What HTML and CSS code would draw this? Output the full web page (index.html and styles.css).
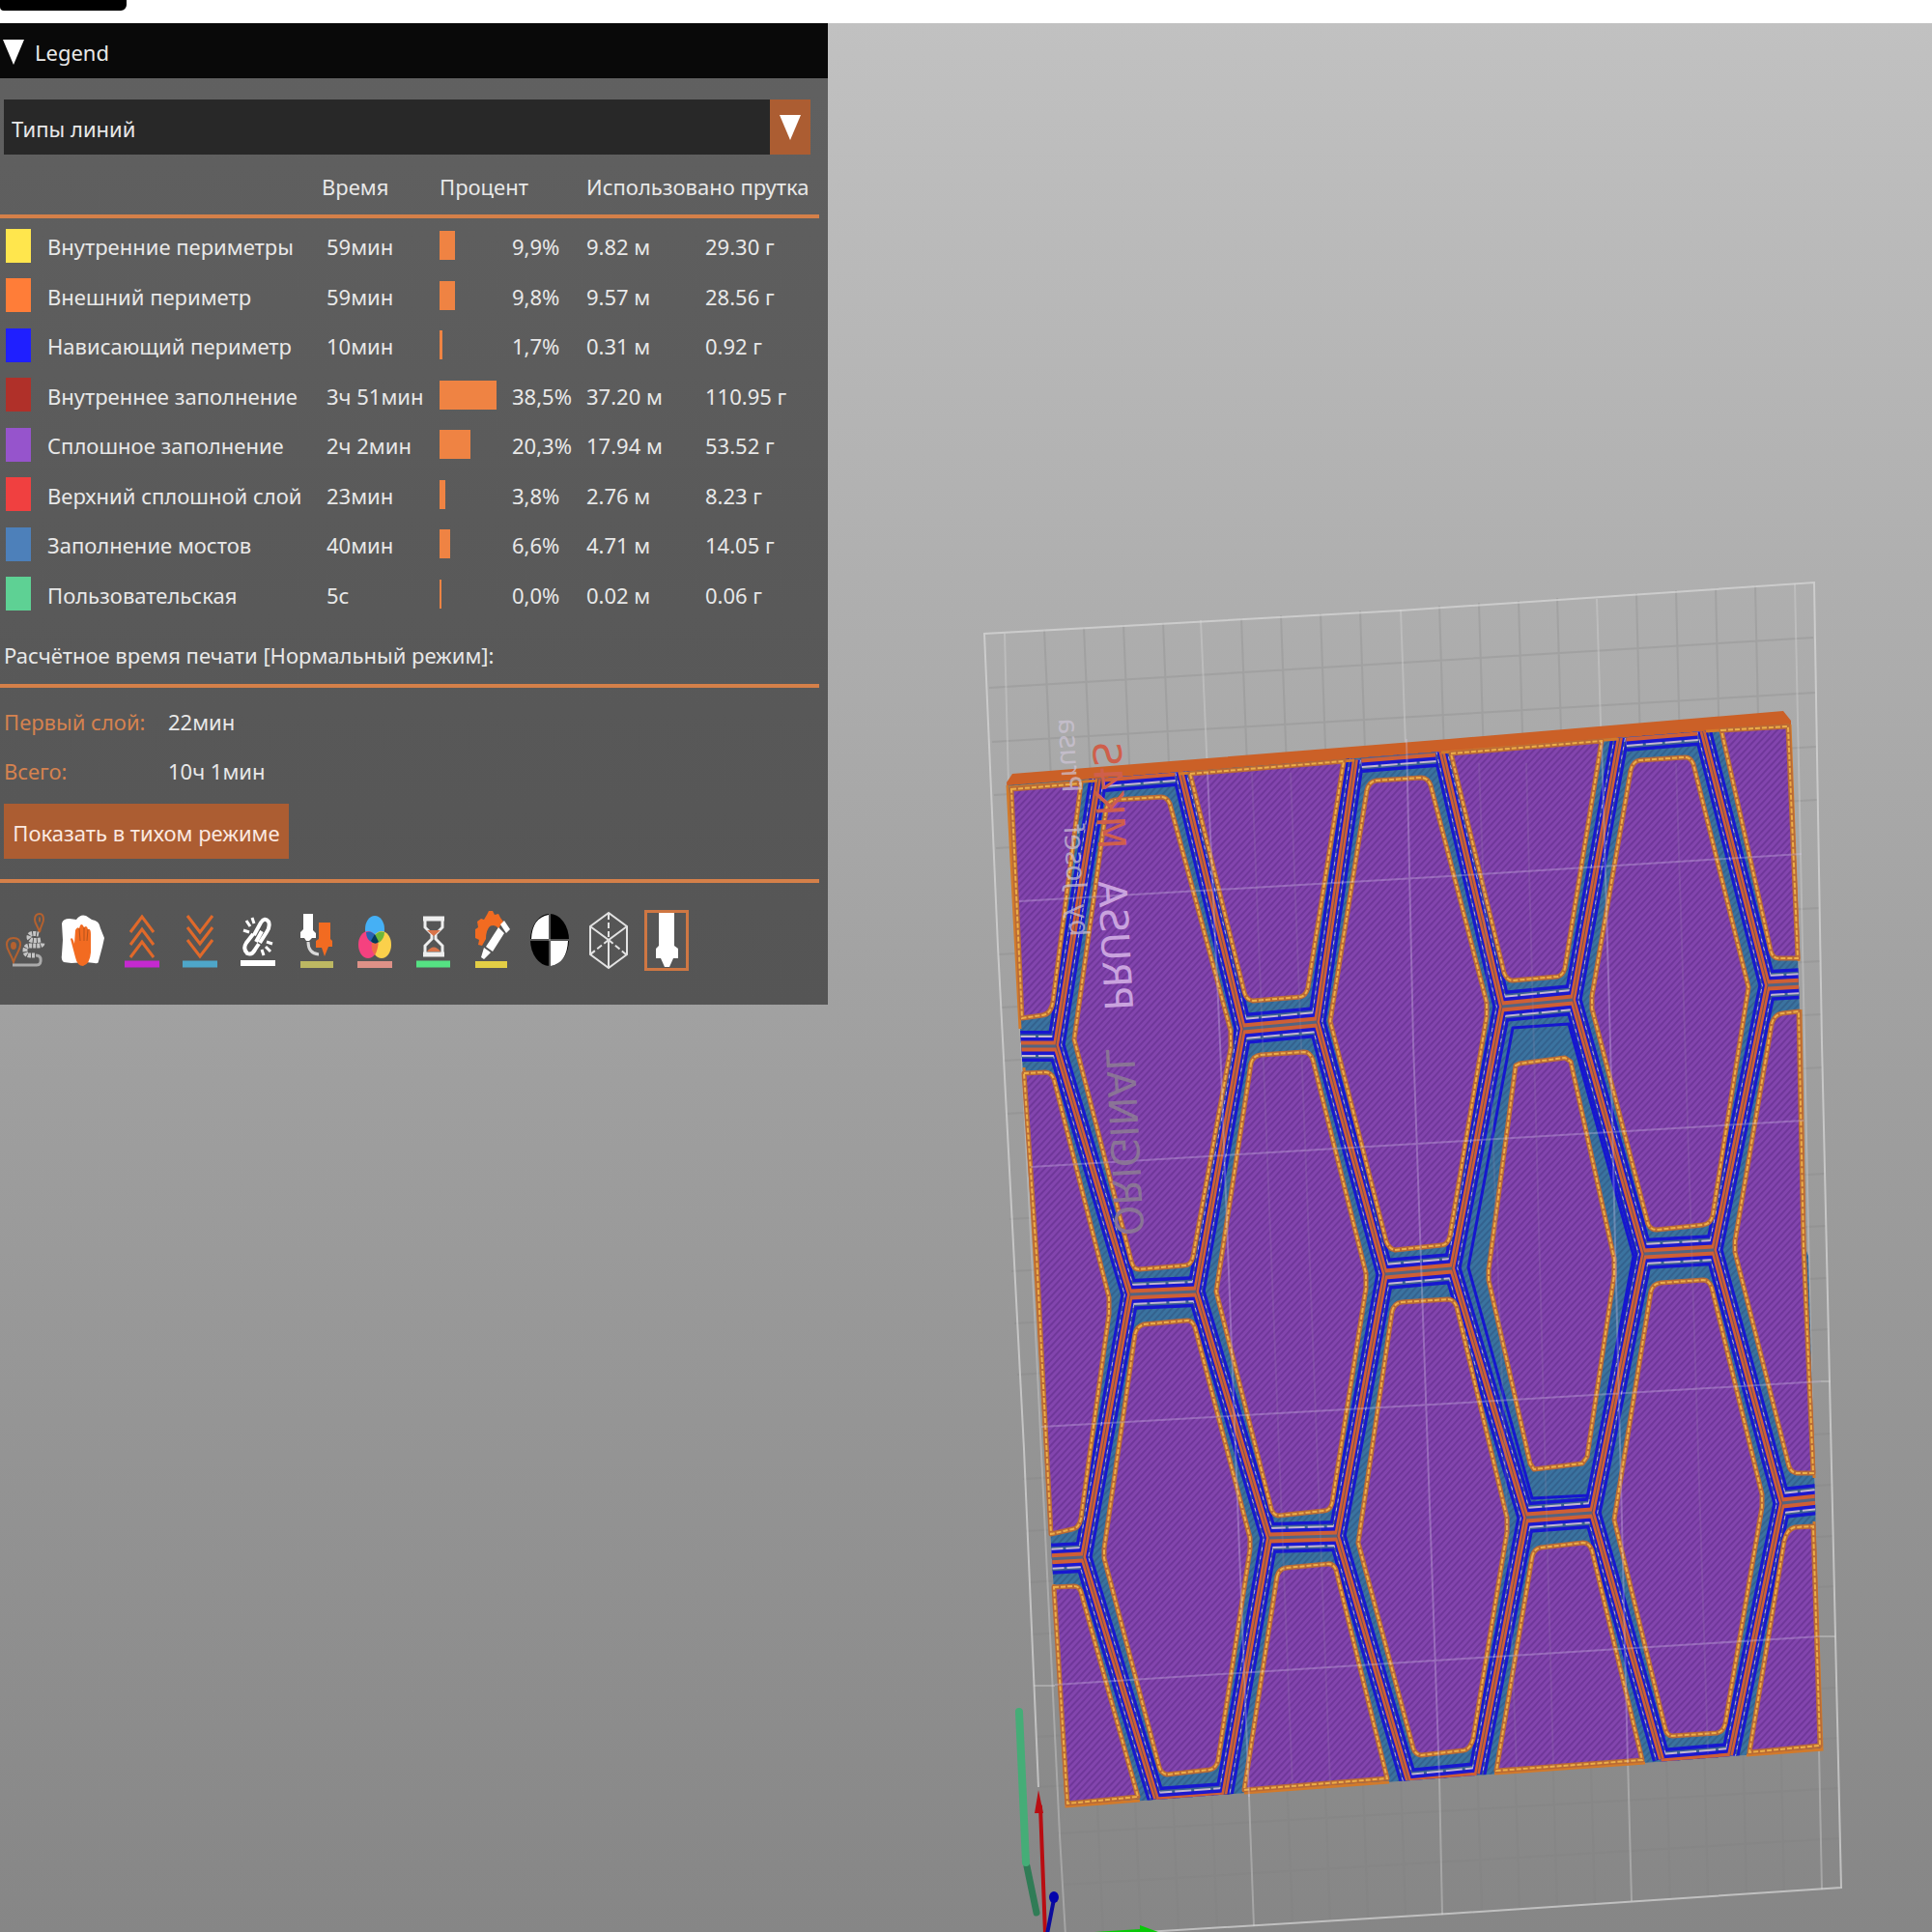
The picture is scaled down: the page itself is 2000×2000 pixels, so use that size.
FILE: index.html
```html
<!DOCTYPE html>
<html lang="ru">
<head>
<meta charset="utf-8">
<title>Legend</title>
<meta name="viewport" content="width=device-width, initial-scale=1">
<link rel="stylesheet" href="styles.css">
</head>
<body>
<header class="topbar"><div class="topbar-tab"></div></header>
<main class="viewport">
<svg class="scene" viewBox="0 24 2000 1976" preserveAspectRatio="xMinYMin meet" aria-hidden="true">
  <defs>
    <pattern id="solid" width="5" height="5" patternUnits="userSpaceOnUse" patternTransform="rotate(-47)">
      <rect width="5" height="5" fill="#8345ae"/><rect width="5" height="2" fill="#6f3799"/>
    </pattern>
    <pattern id="bridge" width="5" height="5" patternUnits="userSpaceOnUse" patternTransform="rotate(-47)">
      <rect width="5" height="5" fill="#3b73a0"/><rect width="5" height="2" fill="#33628e"/>
    </pattern>
    <path id="outline" d="M1043 813L1853 750L1864 1080L1868 1290L1872 1300L1886 1811L1500 1840L1104 1870L1087 1580L1070 1280L1056 1065Z"/>
    <clipPath id="part"><use href="#outline"/></clipPath>
    <path id="slants" d="M1137 806L1093 1082L1170 1340L1121 1612L1197 1862M1222 798L1287 1065L1238 1337L1314 1592L1267 1859M1403 786L1363 1058L1434 1319L1384 1590L1458 1843M1492 776L1555 1042L1503 1313L1580 1571L1529 1836M1677 763L1628 1035L1702 1298L1648 1566L1720 1821M1762 755L1830 1020L1774 1294L1845 1556L1791 1817"/>
    <path id="flats" d="M1055 1083H1093M1287 1065L1363 1058M1555 1042L1628 1035M1830 1020L1866 1018M1170 1340L1238 1337M1434 1319L1503 1313M1702 1298L1774 1294M1084 1614L1121 1612M1314 1592L1384 1590M1580 1571L1648 1566M1845 1556L1882 1552M1143 804L1216 798M1409 784L1486 778M1683 762L1757 756M1197 1866L1267 1861M1458 1847L1529 1840M1720 1826L1791 1820"/>
    <path id="cells" d="M1047 817L1119 811L1090 1037Q1088 1050 1079 1051L1058 1054Z
      M1060 1111L1082 1110Q1088 1110 1091 1117L1148 1343V1360L1119 1572Q1117 1582 1110 1583L1088 1588L1073 1300Z
      M1091 1643L1112 1642Q1117 1642 1119 1648L1178 1860L1105 1867Z
      M1145 838Q1147 829 1154 828L1202 825Q1208 825 1211 832L1274 1067V1085L1235 1301Q1233 1310 1226 1310L1179 1314Q1173 1314 1171 1305L1112 1076Z
      M1175 1381Q1177 1373 1184 1371L1228 1367Q1234 1366 1237 1374L1294 1592V1604L1261 1822Q1259 1831 1252 1832L1208 1837Q1202 1836 1200 1829L1143 1613V1603Z
      M1232 801L1391 788L1354 1022Q1352 1031 1346 1032L1297 1036Q1290 1035 1288 1027Z
      M1295 1101Q1297 1093 1305 1092L1350 1089Q1356 1089 1359 1097L1414 1318V1334L1379 1556Q1377 1564 1370 1564L1323 1569Q1318 1568 1316 1562L1259 1337Z
      M1322 1632Q1324 1624 1331 1623L1374 1619Q1380 1618 1383 1625L1436 1841L1288 1853Z
      M1415 818Q1417 809 1425 808L1471 805Q1478 805 1481 813L1539 1038V1052L1501 1279Q1499 1289 1492 1289L1444 1294Q1438 1293 1435 1285L1377 1057Z
      M1441 1358Q1443 1349 1451 1348L1499 1345Q1505 1345 1508 1353L1560 1571V1586L1525 1800Q1522 1811 1515 1812L1471 1817Q1465 1816 1463 1810L1406 1597Z
      M1502 780L1658 767L1620 1002Q1618 1010 1612 1011L1566 1015Q1560 1015 1557 1007Z
      M1569 1103L1573 1101L1620 1095L1626 1099L1671 1303V1320L1643 1508L1638 1515L1588 1521L1584 1515L1541 1325V1315Z
      M1586 1612Q1588 1603 1595 1602L1639 1597Q1645 1597 1648 1605L1700 1822L1549 1833Z
      M1688 798Q1690 788 1698 787L1743 784Q1750 783 1753 791L1810 1022L1773 1258Q1771 1267 1763 1268L1715 1273Q1709 1273 1706 1267L1648 1044V1031Z
      M1709 1337Q1711 1329 1719 1328L1763 1325Q1769 1325 1772 1333L1824 1547V1560L1786 1784Q1784 1793 1777 1794L1731 1797Q1726 1797 1724 1790L1671 1573Z
      M1782 756L1851 752L1861 992H1841Q1835 992 1833 984Z
      M1834 1060Q1837 1050 1845 1049L1862 1047L1867 1290L1877 1525H1860Q1854 1524 1852 1518L1796 1296V1285Z
      M1847 1595Q1850 1583 1858 1581L1877 1580L1884 1807L1811 1814Z"/>
  </defs>

  <!-- print bed: fine grid -->
  <path class="grid-fine" d="M1081 652L1142 2002M1122 650L1181 1999M1163 647L1220 1997M1204 645L1260 1994M1285 640L1338 1989M1326 637L1377 1987M1367 635L1416 1985M1408 632L1455 1982M1490 627L1534 1977M1531 624L1573 1975M1572 622L1612 1973M1612 619L1651 1970M1694 614L1729 1966M1735 611L1768 1963M1776 609L1808 1960M1817 606L1847 1958
    M1024 712L1877 660M1027 768L1879 717M1029 823L1880 773M1031 878L1881 828M1034 988L1883 940M1037 1043L1884 995M1039 1098L1885 1050M1041 1153L1886 1105M1045 1262L1889 1215M1047 1316L1890 1269M1050 1370L1891 1323M1053 1423L1893 1376M1059 1531L1895 1484M1062 1585L1897 1537M1065 1638L1898 1590M1068 1692L1899 1642M1072 1798L1902 1747M1075 1850L1903 1799M1095 1898L1904 1851M1100 1951L1905 1903"/>
  <path class="grid-edge" d="M1243 642L1250 800L1293 1860L1298 1994M1450 631L1456 800L1490 1840L1493 1982M1653 620L1658 780L1685 1820L1689 1968M1858 604L1864 884L1886 1956M1040 656L1044 812L1058 1100L1073 1400L1097 1900L1103 2004"/>
  <path class="grid-rim" d="M1103 2005L1500 1981L1906 1954L1900 1694L1886 1080L1878 603L1450 632L1019 656L1033 980L1060 1500L1075 1850"/>
  <path class="grid-edge" d="M1070 1745H1092M1884 1694H1900M1885 1430H1895"/>

  <!-- sliced part -->
  <path d="M1042 810L1048 801L1500 765L1846 736L1854 746V760L1043 822Z" fill="#cb6027"/>
  <use href="#outline" fill="url(#bridge)"/>
  <g clip-path="url(#part)" fill="none" stroke-linejoin="round">
    <path d="M1566 1064L1624 1060L1691 1300L1645 1548L1586 1551L1520 1312Z" stroke="#1616cf" stroke-width="3"/>
    <use href="#flats" stroke="#1717d0" stroke-width="32"/>
    <use href="#slants" stroke="#1717d0" stroke-width="19"/>
    <use href="#flats" stroke="#3d6390" stroke-width="25"/>
    <use href="#slants" stroke="#3f568f" stroke-width="13"/>
    <use href="#flats" stroke="#c3b8d0" stroke-width="22" stroke-dasharray="17 3"/>
    <use href="#slants" stroke="#b9afd8" stroke-width="12" stroke-dasharray="4 5"/>
    <use href="#flats" stroke="#1c18cf" stroke-width="18"/>
    <use href="#slants" stroke="#1c18cf" stroke-width="10"/>
    <use href="#flats" stroke="#cf5f35" stroke-width="11"/>
    <use href="#slants" stroke="#cf5f35" stroke-width="6"/>
    <use href="#flats" stroke="#536482" stroke-width="3"/>
    <use href="#slants" stroke="#6a5262" stroke-width="1"/>
  </g>
  <path d="M1045 815L1136 808M1220 801L1402 787M1492 779L1675 765M1766 757L1852 751M1043 813L1056 1065M1060 1105L1087 1580M1091 1640L1104 1870L1180 1864M1288 1856L1438 1845M1547 1836L1703 1825M1808 1817L1886 1811L1878 1575M1853 750L1862 995M1864 1045L1868 1290L1878 1530" fill="none" stroke="#d27a2b" stroke-width="3"/>
  <use href="#cells" fill="url(#solid)" stroke="#b96a35" stroke-width="5" stroke-linejoin="round"/>
  <use href="#cells" fill="none" stroke="#ecae48" stroke-width="2" stroke-dasharray="5 2"/>

  <!-- bed lines seen through the part -->
  <path class="grid-over" d="M1055 933L1500 907L1865 884M1067 1208L1500 1182L1867 1160M1078 1477L1500 1453L1885 1430M1092 1744L1500 1718L1884 1694M1250 800L1263 1080L1282 1580L1293 1860M1456 765L1463 1080L1480 1560L1490 1840M1658 768L1667 1080L1685 1825"/>
  <path class="grid-hint" d="M1296 800L1338 1850M1336 800L1377 1848M1531 790L1570 1830M1580 790L1608 1828M1735 790L1768 1815"/>

  <g class="bed-title">
    <text transform="translate(1155 1280) rotate(-93) scale(1 -1)" fill="#8a7496">ORIGINAL</text>
    <text transform="translate(1144 1047) rotate(-93) scale(1 -1)" fill="#c9a3de">PRUSA</text>
    <text transform="translate(1137 880) rotate(-93) scale(1 -1)" fill="#cf5f4b">MK4S</text>
  </g>
  <g class="bed-author">
    <text transform="translate(1108 970) rotate(-93) scale(1 -1)">by</text>
    <text transform="translate(1105 921) rotate(-93) scale(1 -1)">Josef</text>
    <text transform="translate(1100 821) rotate(-93) scale(1 -1)">Prusa</text>
  </g>

  <!-- origin axes and purge line -->
  <g fill="none" stroke-linecap="round">
    <path d="M1063 1932L1073 1980" stroke="#307c56" stroke-width="7"/>
    <path d="M1055 1772L1062 1928" stroke="#45ad77" stroke-width="8"/>
    <path d="M1082 2002L1077 1870" stroke="#b90d12" stroke-width="4"/>
    <path d="M1084 2002L1091 1966" stroke="#0c0c9c" stroke-width="4"/>
  </g>
  <path d="M1075 1853L1080 1877H1071Z" fill="#b90d12"/>
  <ellipse cx="1091" cy="1964" rx="5" ry="6" fill="#0404ac"/>
  <path d="M1133 2000L1180 1997V1993L1199 2000Z" fill="#08c908"/>
</svg>

<section class="panel" aria-label="Legend">
  <h1 class="panel-title"><svg class="caret" viewBox="0 0 22 26"><path d="M0 0H22L11 26Z"/></svg>Legend</h1>
  <div class="panel-body">
    <div class="combo">
      <select class="combo-input" aria-label="Типы линий"><option>Типы линий</option></select>
      <span class="combo-arrow"><svg class="caret" viewBox="0 0 22 26"><path d="M0 0H22L11 26Z"/></svg></span>
    </div>
    <table class="legend">
      <colgroup><col class="c-swatch"><col class="c-name"><col class="c-time"><col class="c-bar"><col class="c-pct"><col class="c-len"><col></colgroup>
      <thead><tr><td></td><td></td><th scope="col">Время</th><th scope="col" colspan="2">Процент</th><th scope="col" colspan="2">Использовано прутка</th></tr></thead>
      <tbody>
        <tr><td><span class="swatch yellow"></span></td><td>Внутренние периметры</td><td class="time">59мин</td><td><span class="bar" style="width:16px"></span></td><td>9,9%</td><td>9.82 м</td><td>29.30 г</td></tr>
        <tr><td><span class="swatch orange"></span></td><td>Внешний периметр</td><td class="time">59мин</td><td><span class="bar" style="width:16px"></span></td><td>9,8%</td><td>9.57 м</td><td>28.56 г</td></tr>
        <tr><td><span class="swatch blue"></span></td><td>Нависающий периметр</td><td class="time">10мин</td><td><span class="bar" style="width:3px"></span></td><td>1,7%</td><td>0.31 м</td><td>0.92 г</td></tr>
        <tr><td><span class="swatch brick"></span></td><td>Внутреннее заполнение</td><td class="time">3ч 51мин</td><td><span class="bar" style="width:59px"></span></td><td>38,5%</td><td>37.20 м</td><td>110.95 г</td></tr>
        <tr><td><span class="swatch purple"></span></td><td>Сплошное заполнение</td><td class="time">2ч 2мин</td><td><span class="bar" style="width:32px"></span></td><td>20,3%</td><td>17.94 м</td><td>53.52 г</td></tr>
        <tr><td><span class="swatch red"></span></td><td>Верхний сплошной слой</td><td class="time">23мин</td><td><span class="bar" style="width:6px"></span></td><td>3,8%</td><td>2.76 м</td><td>8.23 г</td></tr>
        <tr><td><span class="swatch steel"></span></td><td>Заполнение мостов</td><td class="time">40мин</td><td><span class="bar" style="width:11px"></span></td><td>6,6%</td><td>4.71 м</td><td>14.05 г</td></tr>
        <tr><td><span class="swatch green"></span></td><td>Пользовательская</td><td class="time">5с</td><td><span class="bar" style="width:2px"></span></td><td>0,0%</td><td>0.02 м</td><td>0.06 г</td></tr>
      </tbody>
    </table>
    <h2 class="estimate-title">Расчётное время печати [Нормальный режим]:</h2>
    <dl class="estimate">
      <dt>Первый слой:</dt><dd>22мин</dd>
      <dt>Всего:</dt><dd>10ч 1мин</dd>
    </dl>
    <button class="mode-button" type="button">Показать в тихом режиме</button>
    <div class="toolbar">
      <button class="tool" type="button" aria-label="Перемещения"><svg viewBox="0 0 44 61" fill="none">
        <g stroke="#b4612f" stroke-width="2"><path d="M10 53C7 43 3 41 3 35C3 30 6 28 10 28S17 30 17 35C17 41 13 43 10 53Z"/><path d="M37 22C35 15 32 13 32 9C32 5 34 3 37 3S41 5 41 9C41 13 38 15 37 22Z"/></g>
        <ellipse cx="10" cy="36" rx="3" ry="4" fill="#b4612f"/><ellipse cx="37" cy="9" rx="1" ry="3" fill="#b4612f"/>
        <path d="M9 56H34Q39 56 38 49Q37 46 33 46" stroke="#aaa" stroke-width="3"/>
        <path d="M32 46H27Q22 46 22 41T27 36H36Q40 36 40 33M38 30Q26 32 26 27T36 24" stroke="#c5c5c5" stroke-width="5" stroke-dasharray="3 1"/></svg></button>
      <button class="tool" type="button" aria-label="Очистка"><svg viewBox="0 0 44 61">
        <path d="M0 13Q1 8 8 8L15 9Q19 3 25 5L31 9Q39 10 40 18L44 28L42 37L38 52Q38 55 34 54L25 53L10 54L2 53Q-1 51 0 45L1 30Z" fill="#fff"/>
        <path d="M9 29Q11 26 13 34L14 20Q16 16 18 18L19 15Q21 12 23 17Q26 14 27 19Q30 18 30 24V43Q29 55 22 57Q16 57 14 48Z" fill="#f26b21"/><path d="M18 18L19 31M23 17V31M27 19L26 31" stroke="#b3531c" fill="none"/></svg></button>
      <button class="tool" type="button" aria-label="Ретракты"><svg viewBox="0 0 44 61" fill="none">
        <path d="M10 22L22 6L34 22M10 35L22 19L34 35M10 48L22 32L34 48" stroke="#e0692a" stroke-width="3"/><path d="M4 55H40" stroke="#c429cf" stroke-width="7"/></svg></button>
      <button class="tool" type="button" aria-label="Подачи"><svg viewBox="0 0 44 61" fill="none">
        <path d="M9 5L22 22L35 5M9 17L22 34L35 17M9 30L22 47L35 30" stroke="#e0692a" stroke-width="3"/><path d="M4 55H40" stroke="#4ea6c9" stroke-width="7"/></svg></button>
      <button class="tool" type="button" aria-label="Швы"><svg viewBox="0 0 44 61" fill="none">
        <path d="M18 25L25 12Q29 6 33 11Q35 16 31 22L24 33M26 21L20 32M17 24L10 33Q6 39 11 44Q16 46 19 40L23 34" stroke="#fff" stroke-width="4"/>
        <path d="M16 7L18 13M10 10L14 16M7 20L13 22M31 32L37 34M30 37L35 42M26 40L28 46" stroke="#fff" stroke-width="3"/><path d="M4 54H40" stroke="#fff" stroke-width="6"/></svg></button>
      <button class="tool" type="button" aria-label="Смена инструмента"><svg viewBox="0 0 44 61">
        <path d="M8 3H18V20L21 23V28H17L14 31H11L9 28H5V22L8 19Z" fill="#fff"/><path d="M13 32Q13 44 24 45" fill="none" stroke="#d8d8d8" stroke-width="3"/>
        <path d="M24 12H36V29L38 31V37H34L30 47L27 38H21V31L24 29Z" fill="#f26b21"/><path d="M5 52H39V59H5Z" fill="#bdb862"/></svg></button>
      <button class="tool" type="button" aria-label="Смена цвета"><svg viewBox="0 0 44 61">
        <ellipse cx="22" cy="19" rx="10" ry="14" fill="#45b0f5"/><ellipse cx="15" cy="35" rx="10" ry="14" fill="#f5417f"/><ellipse cx="29" cy="35" rx="10" ry="14" fill="#fbd04b"/>
        <path d="M22 25Q29 32 22 46Q15 37 22 25Z" fill="#ee6b45"/><path d="M13 22Q19 20 23 26L20 33Q13 30 13 22Z" fill="#2763b3"/><path d="M32 22Q25 20 22 26L26 33Q32 29 32 22Z" fill="#6db73a"/><path d="M22 24L26 32Q22 36 18 31Z" fill="#063a5a"/><path d="M4 52H40V59H4Z" fill="#de9187"/></svg></button>
      <button class="tool" type="button" aria-label="Паузы"><svg viewBox="0 0 44 61" fill="none">
        <path d="M11 8H33M11 45H33" stroke="#eee" stroke-width="5"/><path d="M13 10V17L20 24V29L13 36V43M31 10V17L24 24V29L31 36V43" stroke="#eee" stroke-width="3"/><path d="M15 20H29L22 26ZM15 42Q22 33 29 42Z" fill="#d9744a"/><path d="M4 55H39" stroke="#55e283" stroke-width="7"/></svg></button>
      <button class="tool" type="button" aria-label="Пользовательский код"><svg viewBox="0 0 44 61">
        <path d="M17 4L19 0H23L25 4L29 3L31 7L34 11L29 18Q25 13 20 16Q16 20 16 29L12 36L8 35L9 30L5 28V24L5 19L8 17L7 11L11 8L14 9Z" fill="#f26b21"/><path d="M29 17L35 23L23 42L16 37ZM31 14L35 10L41 19L37 23ZM14 38L21 43L14 50L11 48Z" fill="#fff"/><path d="M5 52H38V59H5Z" fill="#e3ce45"/></svg></button>
      <button class="tool" type="button" aria-label="Центр масс"><svg viewBox="0 0 44 61">
        <ellipse cx="22" cy="30" rx="20" ry="27"/><path d="M21 4Q4 7 3 29H21ZM23 31H41Q40 54 23 57Z" fill="#fff"/><path d="M2 30H42M22 3V57" stroke="#aaa"/></svg></button>
      <button class="tool" type="button" aria-label="Оболочки"><svg viewBox="0 0 44 61" fill="none" stroke="#e2e2e2" stroke-width="2">
        <path d="M22 2L3 16V45L22 59L41 45V16ZM3 16L22 30L41 16M22 30V59"/><path d="M22 3V30L40 45M22 30L3 45" stroke-dasharray="6 3"/></svg></button>
      <button class="tool active" type="button" aria-label="Маркер инструмента"><svg viewBox="0 0 44 61">
        <path d="M14 1H30V36L34 39V49H29L25 58H20L16 49H11V39L14 36Z" fill="#fff"/></svg></button>
    </div>
  </div>
</section>
</main>
</body>
</html>
```
FILE: styles.css
```css
* { box-sizing: border-box; }

body {
  margin: 0;
  min-height: 100vh;
  display: flex;
  flex-direction: column;
  overflow: hidden;
  background: #fff;
  color: #e8e8e8;
  font-family: "Noto Sans", sans-serif;
  font-size: 22px;
}

.topbar { height: 24px; flex: none; }

.topbar-tab {
  width: 131px;
  height: 11px;
  background: #000;
  border-radius: 0 0 6px 4px;
}

.viewport {
  position: relative;
  flex: 1;
  background: linear-gradient(#c1c1c1, #a2a2a2 50%, #868686);
}

/* 3D view, behind the floating panel */
.scene {
  position: absolute;
  top: 0;
  left: 0;
  width: 100%;
  height: 100%;
}

.grid-fine { fill: none; stroke: #808080; stroke-opacity: .25; stroke-width: 2; }
.grid-edge { fill: none; stroke: #d4d4d4; stroke-opacity: .4; stroke-width: 2; }
.grid-rim { fill: none; stroke: #d8d8d8; stroke-opacity: .7; stroke-width: 2; }
.grid-over { fill: none; stroke: #d8c8e8; stroke-opacity: .32; stroke-width: 2; }
.grid-hint { fill: none; stroke: #a090b0; stroke-opacity: .18; stroke-width: 2; }
.bed-title { font-family: "DejaVu Sans", sans-serif; font-size: 40px; }
.bed-author { font-family: "DejaVu Sans", sans-serif; font-size: 28px; fill: #cfc6d8; fill-opacity: .7; }

.panel {
  position: relative;
  width: 857px;
  max-width: 100%;
  background: linear-gradient(#616161, #5a5a5a 50%, #555);
}

.panel-title {
  display: flex;
  align-items: center;
  gap: 11px;
  height: 57px;
  margin: 0;
  padding: 2px 0 0 3px;
  background: #090909;
  font-size: 22px;
  font-weight: 400;
}

.caret { width: 22px; height: 26px; fill: #fff; }

.panel-body { padding: 22px 9px 36px 0; }

.combo {
  display: grid;
  grid-template-columns: 1fr 42px;
  height: 57px;
  margin: 0 9px 0 4px;
}

.combo-input {
  grid-area: 1 / 1 / 2 / 3;
  appearance: none;
  border: 0;
  border-radius: 0;
  padding: 2px 8px 0;
  background: #282828;
  color: inherit;
  font: inherit;
}

.combo-arrow {
  grid-area: 1 / 2;
  display: flex;
  align-items: center;
  justify-content: center;
  background: #ac5d32;
  pointer-events: none;
}

.legend {
  width: 100%;
  table-layout: fixed;
  border-spacing: 0;
  white-space: nowrap;
}

.legend th, .legend td { padding: 0; text-align: left; font-weight: 400; }
.legend thead td, .legend thead th { height: 66px; padding-top: 4px; border-bottom: 4px solid #d58049; }
.legend tbody { line-height: 51px; }
.legend tbody tr:nth-child(even) { line-height: 52px; }
.legend tbody::before { content: ""; display: table-row; height: 4px; }
.legend .time { padding-left: 5px; }

.c-swatch { width: 49px; }
.c-name { width: 284px; }
.c-time { width: 122px; }
.c-bar { width: 75px; }
.c-pct { width: 77px; }
.c-len { width: 123px; }

.swatch { display: block; width: 26px; height: 35px; margin: 0 0 3px 6px; }
.bar { display: block; height: 30px; margin-bottom: 3px; background: #ef8343; }

.yellow { background: #ffe64d; }
.orange { background: #ff7d38; }
.blue { background: #1f1fff; }
.brick { background: #b03029; }
.purple { background: #9654cc; }
.red { background: #f04040; }
.steel { background: #4d80ba; }
.green { background: #5ed194; }

.estimate-title {
  margin: 0;
  padding: 6px 0 0 4px;
  border-bottom: 4px solid #d58049;
  font-size: 22px;
  font-weight: 400;
  line-height: 60px;
}

.estimate {
  display: grid;
  grid-template-columns: 170px 1fr;
  margin: 0;
  padding: 10px 0 8px 4px;
  line-height: 51px;
}

.estimate dt { color: #d5824f; }
.estimate dd { margin: 0; }

.mode-button {
  display: block;
  width: 295px;
  height: 57px;
  margin: 0 0 21px 4px;
  padding: 2px 0 0;
  border: 0;
  background: #ac5d32;
  color: #fbe9e0;
  font: inherit;
  white-space: nowrap;
}

.toolbar {
  display: flex;
  padding: 29px 136px 0 4px;
  border-top: 4px solid #d58049;
  justify-content: space-between;
}

.tool {
  width: 44px;
  height: 61px;
  padding: 0;
  border: 0;
  background: none;
}

.tool svg { display: block; width: 44px; height: 61px; overflow: visible; }
.active { outline: 3px solid #cf7743; outline-offset: -2px; }
```
